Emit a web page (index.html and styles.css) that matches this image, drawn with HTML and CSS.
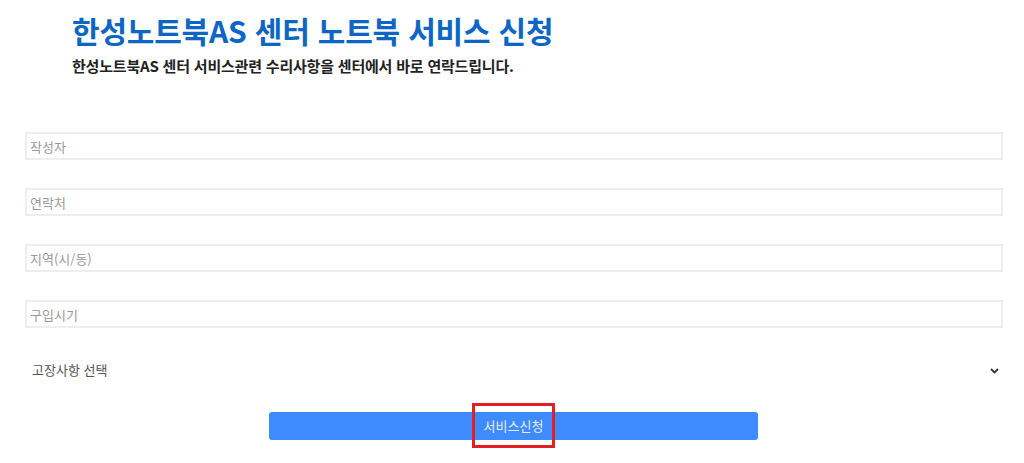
FILE: index.html
```html
<!DOCTYPE html>
<html lang="ko">
  <head>
    <meta charset="UTF-8" />
    <meta name="viewport" content="width=device-width, initial-scale=1.0" />
    <title>한성노트북AS 센터 노트북 서비스 신청</title>
    <link rel="stylesheet" href="styles.css">
  </head>
  <body>
    <div class="page-header">
      <h1 class="page-title">한성노트북AS 센터 노트북 서비스 신청</h1>
      <p class="page-desc">한성노트북AS 센터 서비스관련 수리사항을 센터에서 바로 연락드립니다.</p>
    </div>

    <form class="service-form">
      <input type="text" class="form-input" placeholder="작성자" />
      <input type="text" class="form-input" placeholder="연락처" />
      <input type="text" class="form-input" placeholder="지역(시/동)" />
      <input type="text" class="form-input" placeholder="구입시기" />

      <div class="select-box">
        <select class="form-select">
          <option>고장사항 선택</option>
          <option>액정 파손</option>
          <option>전원 불량</option>
          <option>키보드 불량</option>
          <option>기타</option>
        </select>
        <svg class="select-arrow" width="9" height="6" viewBox="0 0 9 6">
          <path d="M1 1 L4.5 4.5 L8 1" fill="none" stroke="#333" stroke-width="1.8" />
        </svg>
      </div>

      <div class="form-actions">
        <div class="submit-btn" role="button"><span class="btn-label">서비스신청</span></div>
      </div>
    </form>
  </body>
</html>
```

FILE: styles.css
```css
* {
  margin: 0;
  padding: 0;
  box-sizing: border-box;
  font-family: "Noto Sans CJK KR", "Noto Sans", sans-serif;
}
body {
  background-color: #fff;
  width: 1024px;
  min-height: 463px;
}
.page-header {
  padding: 12px 0 0 72px;
}
.page-title {
  font-size: 30px;
  line-height: 36px;
  font-weight: 700;
  color: #0d66c4;
  letter-spacing: -0.2px;
}
.page-desc {
  margin-top: 8px;
  font-size: 15px;
  line-height: 20px;
  font-weight: 700;
  color: #222;
  letter-spacing: -0.2px;
}
.service-form {
  margin-top: 56px;
  padding: 0 21px 20px 25px;
}
.form-input {
  display: block;
  width: 100%;
  height: 28px;
  margin-bottom: 28px;
  padding: 0 3px;
  border: 2px solid #eee;
  font-size: 13px;
  color: #333;
  outline: none;
}
.form-input::placeholder {
  color: #999;
}
.select-box {
  display: flex;
  align-items: center;
  height: 28px;
  margin-top: 30px;
  padding: 0 4px 0 7px;
}
.form-select {
  flex: 1;
  appearance: none;
  border: none;
  background: none;
  font-size: 13px;
  line-height: 22px;
  height: 22px;
  margin-top: -5px;
  color: #555;
  outline: none;
}
.select-arrow {
  display: block;
  margin-top: -3px;
}
.form-actions {
  display: flex;
  justify-content: center;
  margin-top: 26px;
}
.submit-btn {
  width: 489px;
  height: 28px;
  margin-left: 219px;
  margin-right: 220px;
  background-color: #3d8bfd;
  border-radius: 3px;
  text-align: center;
  font-size: 13px;
  line-height: 28px;
  cursor: pointer;
}
.btn-label {
  padding: 10px 9px;
  border: 3px solid #e31e24;
  font-size: 13px;
  color: #e6edff;
}
```
